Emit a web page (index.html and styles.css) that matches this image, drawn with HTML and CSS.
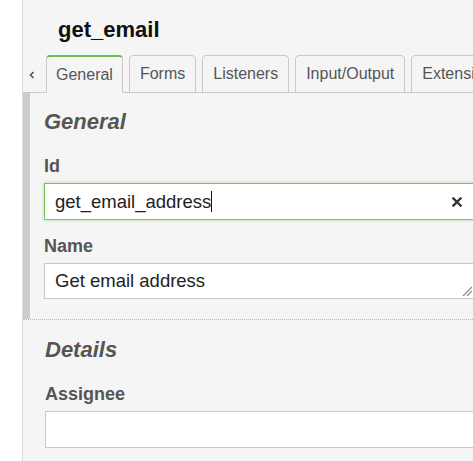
FILE: index.html
```html
<!DOCTYPE html>
<html>
<head>
<meta charset="utf-8">
<link rel="stylesheet" href="styles.css">
</head>
<body>
<div class="panel">
  <div class="title">get_email</div>
  <div class="tabs">
    <div class="scroll-left">
      <svg width="6" height="8" viewBox="0 0 6 8"><polyline points="4.5,1 1.5,4 4.5,7" fill="none" stroke="#555" stroke-width="1.6"/></svg>
    </div>
    <div class="tab active">General</div>
    <div class="tab">Forms</div>
    <div class="tab">Listeners</div>
    <div class="tab">Input/Output</div>
    <div class="tab">Extensions</div>
  </div>
  <div class="group current">
    <div class="group-title">General</div>
    <div class="label">Id</div>
    <div class="field focused">
      <span class="value">get_email_address</span><span class="caret"></span>
      <svg class="clear" width="10" height="10" viewBox="0 0 10 10"><path d="M1.5 1.5 L8.5 8.5 M8.5 1.5 L1.5 8.5" stroke="#333" stroke-width="2.4" stroke-linecap="square"/></svg>
    </div>
    <div class="label">Name</div>
    <div class="field area">
      <span class="value">Get email address</span>
      <svg class="resize" width="10" height="10" viewBox="0 0 10 10"><path d="M1 10 L10 1 M5 10 L10 5" stroke="#888" stroke-width="1.2"/></svg>
    </div>
  </div>
  <div class="group details">
    <div class="group-title">Details</div>
    <div class="label">Assignee</div>
    <div class="field"></div>
  </div>
</div>
</body>
</html>
```
FILE: styles.css
```css
html, body {
  margin: 0;
  padding: 0;
  background: #ffffff;
  overflow: hidden;
}
body {
  font-family: "Liberation Sans", Arial, Helvetica, sans-serif;
  width: 473px;
  height: 461px;
}
.panel {
  margin-left: 22px;
  width: 560px;
  height: 461px;
  background: #f5f5f5;
  border-left: 1px solid #dcdcdc;
}
.title {
  padding: 17px 0 0 35px;
  height: 26px;
  line-height: 26px;
  font-size: 22px;
  font-weight: bold;
  color: #111;
  margin-bottom: 12px;
}
.tabs {
  display: flex;
  align-items: flex-end;
  gap: 6px;
  height: 37px;
  border-bottom: 1px solid #c9c9c9;
}
.scroll-left {
  width: 17px;
  height: 37px;
  display: flex;
  align-items: center;
  justify-content: center;
  padding-top: 3px;
  box-sizing: border-box;
}
.tab {
  box-sizing: border-box;
  height: 38px;
  margin-bottom: -1px;
  padding: 0 10px;
  line-height: 36px;
  font-size: 16px;
  color: #555;
  border: 1px solid #c9c9c9;
  border-radius: 4px 4px 0 0;
  background: #f5f5f5;
  white-space: nowrap;
  flex: none;
}
.tab.active {
  border-top: 2px solid #6cbf4c;
  border-bottom-color: #f5f5f5;
  line-height: 35px;
  padding: 0 9px;
}
.group {
  padding: 16px 0 20px 22px;
}
.group.current {
  border-left: 7px solid #cccccc;
  padding-left: 14px;
}
.group.details {
  border-top: 1px dotted #bbbbbb;
  padding-top: 17px;
}
.group-title {
  font-size: 22px;
  line-height: 26px;
  font-weight: bold;
  font-style: italic;
  color: #555;
  margin-bottom: 20px;
}
.label {
  font-size: 18px;
  line-height: 22px;
  font-weight: bold;
  color: #555;
  margin-bottom: 6px;
}
.field {
  position: relative;
  box-sizing: border-box;
  width: 432px;
  height: 37px;
  background: #fff;
  border: 1px solid #c8c8c8;
  padding-left: 10px;
  font-size: 18.5px;
  line-height: 35px;
  color: #222;
  display: flex;
  align-items: center;
}
.field.focused {
  border-color: #78c85a;
  box-shadow: 0 0 3px rgba(110, 190, 80, 0.6);
  margin-bottom: 15px;
}
.field.area {
  height: 36px;
  line-height: 34px;
}
.caret {
  display: inline-block;
  width: 1px;
  height: 21px;
  background: #111;
}
.clear {
  position: absolute;
  right: 13px;
  top: 13px;
}
.resize {
  position: absolute;
  right: 3px;
  bottom: 2px;
}
```
